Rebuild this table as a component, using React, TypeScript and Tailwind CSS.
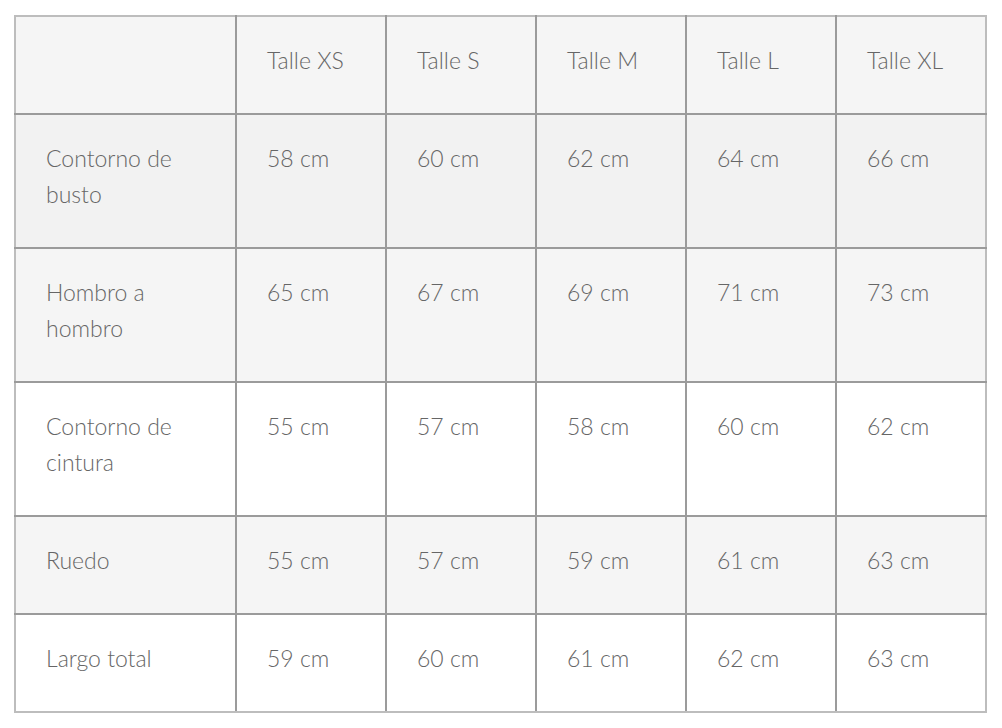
const sizes = ["Talle XS", "Talle S", "Talle M", "Talle L", "Talle XL"];

const rows: { label: string; values: string[]; bg: string }[] = [
    { label: "Contorno de busto", values: ["58 cm", "60 cm", "62 cm", "64 cm", "66 cm"], bg: "bg-[#f2f2f2]" },
    { label: "Hombro a hombro", values: ["65 cm", "67 cm", "69 cm", "71 cm", "73 cm"], bg: "bg-[#f5f5f5]" },
    { label: "Contorno de cintura", values: ["55 cm", "57 cm", "58 cm", "60 cm", "62 cm"], bg: "bg-white" },
    { label: "Ruedo", values: ["55 cm", "57 cm", "59 cm", "61 cm", "63 cm"], bg: "bg-[#f5f5f5]" },
    { label: "Largo total", values: ["59 cm", "60 cm", "61 cm", "62 cm", "63 cm"], bg: "bg-white" },
];

const cell = "border-2 border-[#9b9b9b] px-[30px] pt-[25px] pb-[35px] align-top text-left font-light";

export default function App() {
    return (
        <div className="min-h-[728px] bg-white pt-[15px] pl-[14px] font-['Lato',sans-serif] text-[23px] leading-[36px] text-[#666666]">
            <table className="w-[972px] table-fixed border-collapse">
                <colgroup>
                    <col className="w-[221px]" />
                    <col className="w-[150px]" />
                    <col className="w-[150px]" />
                    <col className="w-[150px]" />
                    <col className="w-[150px]" />
                    <col className="w-[150px]" />
                </colgroup>
                <thead>
                    <tr className="bg-[#f5f5f5]">
                        <th className={`${cell} border-t-[#bdbdbd] border-l-[#bdbdbd]`}></th>
                        {sizes.map((s, i) => (
                            <th
                                key={s}
                                className={`${cell} border-t-[#bdbdbd] ${i === sizes.length - 1 ? "border-r-[#bdbdbd]" : ""}`}
                            >
                                {s}
                            </th>
                        ))}
                    </tr>
                </thead>
                <tbody>
                    {rows.map((r, ri) => (
                        <tr key={r.label} className={r.bg}>
                            <td className={`${cell} border-l-[#bdbdbd] ${ri === rows.length - 1 ? "border-b-[#bdbdbd]" : ""}`}>
                                {r.label}
                            </td>
                            {r.values.map((v, i) => (
                                <td
                                    key={i}
                                    className={`${cell} ${i === r.values.length - 1 ? "border-r-[#bdbdbd]" : ""} ${ri === rows.length - 1 ? "border-b-[#bdbdbd]" : ""}`}
                                >
                                    {v}
                                </td>
                            ))}
                        </tr>
                    ))}
                </tbody>
            </table>
        </div>
    );
}
